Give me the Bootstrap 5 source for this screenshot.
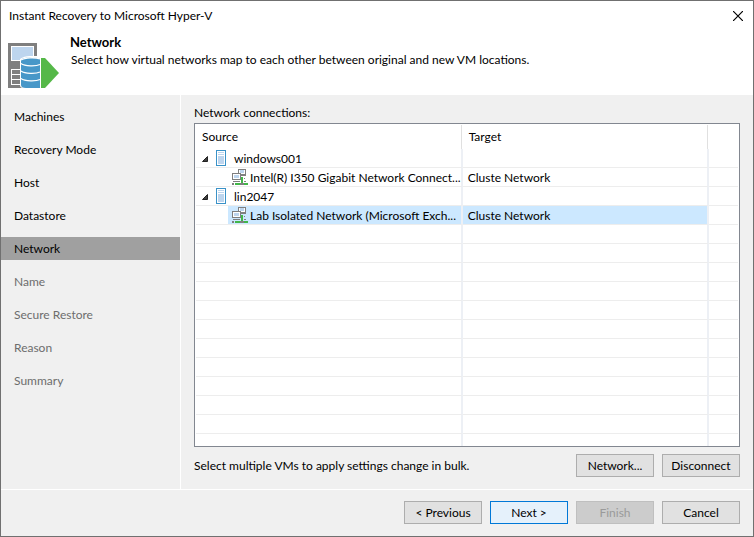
<!DOCTYPE html>
<html lang="en">
<head>
<meta charset="utf-8">
<meta name="viewport" content="width=device-width, initial-scale=1">
<title>Instant Recovery to Microsoft Hyper-V</title>
<link href="https://cdn.jsdelivr.net/npm/bootstrap@5.3.0/dist/css/bootstrap.min.css" rel="stylesheet">
<style>
  body { font-family: Lato, "Noto Sans", sans-serif; font-size: 12px; line-height: 16px; color: #000; }
  .wizard { border: 1px solid #707070; background: #f0f0f0; }
  .titlebar { padding: 6px 8px 4px; }
  .titlebar h1 { font-size: 12px; line-height: 18px; }
  .close-x { width: 14px; height: 18px; }
  .step-info { padding: 5px 7px 6px; gap: 11px; }
  .step-info h2 { font-size: 13px; line-height: 17px; }
  .step-info p { padding-left: 1px; line-height: 18px; }
  .steps { width: 180px; padding-top: 10px; gap: 10px; border-right: 1px solid #fff; }
  .steps .nav-link { padding: 0 13px; line-height: 23px; font-size: 12px; color: #000; border-radius: 0; }
  .steps .nav-link.active { background: #a0a0a0; }
  .steps .nav-link.disabled { color: #6d6d6d; }
  .pane { padding: 8px 13px 12px; }
  .pane-label { line-height: 20px; }
  .grid-box { border: 1px solid #828790; padding: 1px 1px 0; flex-basis: 0; }
  .grid-table { table-layout: fixed; border-collapse: separate; border-spacing: 0; }
  .col-source { width: 49.2%; }
  .col-target { width: 45.4%; }
  .grid-table th { padding: 0 1px 0 0; font-weight: 400; }
  .grid-table th div { height: 24px; line-height: 24px; padding-left: 6px; border-right: 1px solid #e0e0e0; }
  .grid-table th:last-child div { border: 0; }
  .grid-table td { height: 19px; padding: 0; line-height: 17px; border-bottom: 1px solid #ededed; border-right: 2px solid #edf0f5; }
  .grid-table td:last-child { border-right: 0; }
  .grid-table td.target { padding: 1px 0 0 5px; }
  .vm { padding: 1px 0 0 5px; }
  .vm svg { margin: 0 8px 0 7px; }
  .nic { margin-left: 32px; padding: 1px 0 0 4px; gap: 2px; }
  .picked .nic, .picked .target { background: #cce8ff; }
  .twist { width: 8px; height: 8px; }
  .below { padding-top: 7px; gap: 8px; }
  .actions { padding: 11px 13px 12px; gap: 8px; border-top: 1px solid #fff; }
  .btn-win { --bs-btn-font-size: 12px; --bs-btn-line-height: 21px; --bs-btn-padding-x: 0; --bs-btn-padding-y: 0; --bs-btn-border-radius: 0;
    --bs-btn-color: #000; --bs-btn-bg: #e1e1e1; --bs-btn-border-color: #adadad;
    --bs-btn-hover-color: #000; --bs-btn-hover-bg: #e5f1fb; --bs-btn-hover-border-color: #0078d7;
    --bs-btn-disabled-color: #9a9a9a; --bs-btn-disabled-bg: #ccc; --bs-btn-disabled-border-color: #bfbfbf; --bs-btn-disabled-opacity: 1;
    width: 78px; }
  .btn-next { --bs-btn-bg: #e5f1fb; --bs-btn-border-color: #0078d7; }
</style>
</head>
<body>
<svg class="d-none" aria-hidden="true">
  <symbol id="server" viewBox="0 0 10 16"><path fill="#3a92c8" d="M0 0h10v16H0z"/><path fill="#fff" d="M1 1h8v14H1z"/><path fill="#bdd5ee" d="M2 2h6v1H2zM2 4h6v1H2zM2 6h6v8H2z"/></symbol>
  <symbol id="adapter" viewBox="0 0 16 16"><path fill="#7f7f7f" d="M6 0h8v6H6z"/><path fill="#fff" d="M7 1h6v4H7z"/><path fill="#bdd5ee" d="M8 1h4v3H8z"/><path fill="#7f7f7f" d="M8 6h6v1H8zM0 4h9v7H0z"/><path fill="#fff" d="M1 5h7v5H1z"/><path fill="#bdd5ee" d="M2 6h5v3H2z"/><path fill="#7f7f7f" d="M1 12h7v1H1zM0 14h2v2H0zM8 14h4v2H8zM12 9h1v1h-1zM12 12h2v1h-2z"/><path fill="#42b649" d="M9 8h2v6H9zM3 14h5v2H3zM12 14h4v2h-4z"/></symbol>
  <symbol id="open" viewBox="0 0 8 8"><path fill="#404040" stroke="#222" d="M6.500 1.500v5h-5z"/></symbol>
</svg>
<main class="wizard d-flex flex-column min-vh-100">
  <header class="bg-white">
    <div class="titlebar d-flex justify-content-between align-items-center">
      <h1 class="m-0 fw-normal">Instant Recovery to Microsoft Hyper-V</h1>
      <button type="button" class="close-x btn p-0 border-0 d-flex align-items-center justify-content-center" aria-label="Close"><svg width="10" height="10" viewBox="0 0 10 10"><path d="M0 0l10 10M10 0L0 10" stroke="#000" stroke-width="1.2"/></svg></button>
    </div>
    <div class="step-info d-flex">
      <svg class="flex-shrink-0 mt-2" width="51" height="47" viewBox="0 0 51 47" aria-hidden="true">
        <path fill="#7f7f7f" d="M0 1h29v45H0z"/><path fill="#fff" d="M3 4h23v15H3z"/><path fill="#bdd5ee" d="M4 5h21v13H4z"/>
        <path fill="#fff" d="M3 27h10v16H3z"/><path fill="#7f7f7f" d="M4 28h9v4H4zM4 33h9v4H4zM4 38h9v4H4z"/>
        <path fill="#fff" d="M12 17Q16 14 22 14H33V46H15Q12 46 12 43z"/>
        <path fill="#4797c8" d="M13 18C15 15 29 15 32 17V46H18Q13 46 13 43z"/>
        <path fill="none" stroke="#fff" stroke-width="1.300" d="M13 21.500C17 24.500 28 24.500 32 22.500M13 29C17 32 28 32 32 30M13 36.500C17 39.500 28 39.500 32 37.500M13 18C17 15.500 27 15 32 17"/>
        <path fill="#55b848" d="M33 16h4l14 15-14 15h-4z"/>
      </svg>
      <div>
        <h2 class="m-0 fw-bold">Network</h2>
        <p class="m-0">Select how virtual networks map to each other between original and new VM locations.</p>
      </div>
    </div>
  </header>
  <div class="d-flex flex-grow-1">
    <nav class="steps nav flex-column flex-nowrap flex-shrink-0" aria-label="Wizard steps">
      <a class="nav-link" href="#">Machines</a>
      <a class="nav-link" href="#">Recovery Mode</a>
      <a class="nav-link" href="#">Host</a>
      <a class="nav-link" href="#">Datastore</a>
      <a class="nav-link active" href="#" aria-current="step">Network</a>
      <a class="nav-link disabled" href="#" aria-disabled="true">Name</a>
      <a class="nav-link disabled" href="#" aria-disabled="true">Secure Restore</a>
      <a class="nav-link disabled" href="#" aria-disabled="true">Reason</a>
      <a class="nav-link disabled" href="#" aria-disabled="true">Summary</a>
    </nav>
    <section class="pane d-flex flex-column flex-grow-1">
      <div class="pane-label" id="connections">Network connections:</div>
      <div class="grid-box bg-white flex-grow-1 overflow-hidden">
        <table class="grid-table w-100" aria-labelledby="connections">
          <colgroup><col class="col-source"><col class="col-target"><col></colgroup>
          <thead><tr><th scope="col"><div>Source</div></th><th scope="col"><div>Target</div></th><th><div></div></th></tr></thead>
          <tbody>
            <tr><td><div class="vm d-flex align-items-start"><button type="button" class="twist btn p-0 border-0 d-flex align-self-center" aria-label="Collapse windows001"><svg class="m-0" width="8" height="8"><use href="#open"/></svg></button><svg width="10" height="16"><use href="#server"/></svg>windows001</div></td><td></td><td></td></tr>
            <tr><td><div class="nic d-flex align-items-start"><svg class="flex-shrink-0" width="16" height="16"><use href="#adapter"/></svg><span class="text-nowrap">Intel(R) I350 Gigabit Network Connect...</span></div></td><td class="target">Cluste Network</td><td></td></tr>
            <tr><td><div class="vm d-flex align-items-start"><button type="button" class="twist btn p-0 border-0 d-flex align-self-center" aria-label="Collapse lin2047"><svg class="m-0" width="8" height="8"><use href="#open"/></svg></button><svg width="10" height="16"><use href="#server"/></svg>lin2047</div></td><td></td><td></td></tr>
            <tr class="picked" aria-selected="true"><td><div class="nic d-flex align-items-start"><svg class="flex-shrink-0" width="16" height="16"><use href="#adapter"/></svg><span class="text-nowrap">Lab Isolated Network (Microsoft Exch...</span></div></td><td class="target">Cluste Network</td><td></td></tr>
            <tr><td></td><td></td><td></td></tr>
            <tr><td></td><td></td><td></td></tr>
            <tr><td></td><td></td><td></td></tr>
            <tr><td></td><td></td><td></td></tr>
            <tr><td></td><td></td><td></td></tr>
            <tr><td></td><td></td><td></td></tr>
            <tr><td></td><td></td><td></td></tr>
            <tr><td></td><td></td><td></td></tr>
            <tr><td></td><td></td><td></td></tr>
            <tr><td></td><td></td><td></td></tr>
            <tr><td></td><td></td><td></td></tr>
            <tr><td></td><td></td><td></td></tr>
          </tbody>
        </table>
      </div>
      <div class="below d-flex align-items-center">
        <span class="me-auto">Select multiple VMs to apply settings change in bulk.</span>
        <button type="button" class="btn btn-win">Network...</button>
        <button type="button" class="btn btn-win">Disconnect</button>
      </div>
    </section>
  </div>
  <footer class="actions d-flex justify-content-end">
    <button type="button" class="btn btn-win">&lt; Previous</button>
    <button type="button" class="btn btn-win btn-next">Next &gt;</button>
    <button type="button" class="btn btn-win" disabled>Finish</button>
    <button type="button" class="btn btn-win">Cancel</button>
  </footer>
</main>
<script src="https://cdn.jsdelivr.net/npm/bootstrap@5.3.0/dist/js/bootstrap.bundle.min.js"></script>
</body>
</html>
